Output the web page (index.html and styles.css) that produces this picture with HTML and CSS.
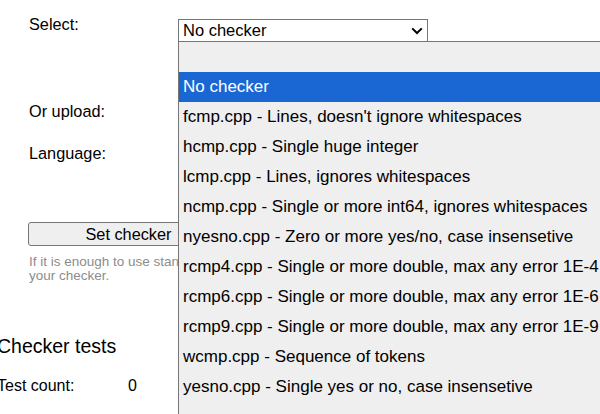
FILE: index.html
```html
<!DOCTYPE html>
<html lang="en">
<head>
<meta charset="utf-8">
<title>Checker</title>
<link rel="stylesheet" href="styles.css">
</head>
<body>
<div class="page">
  <form class="form">
    <div class="row row-select">
      <div class="label">Select:</div>
      <div class="control">
        <div class="select-wrap">
          <div class="select">
            <span class="select-value">No checker</span>
            <svg class="chevron" width="12" height="8" viewBox="0 0 12 8"><path d="M1.2 1.4 L6 6 L10.8 1.4" fill="none" stroke="#000" stroke-width="2"/></svg>
          </div>
          <ul class="dropdown">
            <li class="option"></li>
            <li class="option selected">No checker</li>
            <li class="option">fcmp.cpp - Lines, doesn't ignore whitespaces</li>
            <li class="option">hcmp.cpp - Single huge integer</li>
            <li class="option">lcmp.cpp - Lines, ignores whitespaces</li>
            <li class="option">ncmp.cpp - Single or more int64, ignores whitespaces</li>
            <li class="option">nyesno.cpp - Zero or more yes/no, case insensetive</li>
            <li class="option">rcmp4.cpp - Single or more double, max any error 1E-4</li>
            <li class="option">rcmp6.cpp - Single or more double, max any error 1E-6</li>
            <li class="option">rcmp9.cpp - Single or more double, max any error 1E-9</li>
            <li class="option">wcmp.cpp - Sequence of tokens</li>
            <li class="option">yesno.cpp - Single yes or no, case insensetive</li>
            <li class="option"></li>
          </ul>
        </div>
      </div>
    </div>
    <div class="row row-upload">
      <div class="label">Or upload:</div>
    </div>
    <div class="row row-lang">
      <div class="label">Language:</div>
    </div>
    <div class="actions">
      <button type="button" class="btn">Set checker</button>
      <p class="hint">If it is enough to use standard checker, just select it, otherwise upload<br>your checker.</p>
    </div>
  </form>
  <section class="tests">
    <h2 class="tests-title">Checker tests</h2>
    <div class="tests-row">
      <span class="tests-label">Test count:</span>
      <span class="tests-value">0</span>
    </div>
  </section>
</div>
</body>
</html>
```

FILE: styles.css
```css
html, body {
  margin: 0;
  padding: 0;
  overflow: hidden;
  background: #fff;
}
body {
  font-family: "Liberation Sans", Arial, sans-serif;
  font-size: 16px;
  color: #000;
}
.page {
  width: 600px;
  height: 414px;
  overflow: hidden;
  position: relative;
}
.form {
  padding: 15px 0 0 29px;
  margin: 0;
}
.row {
  display: grid;
  grid-template-columns: 149px 1fr;
}
.row-select { height: 87px; }
.row-upload { height: 42px; }
.row-lang { height: 78px; }
.label {
  line-height: normal;
  font-size: 16.3px;
}
.control {
  padding-top: 4px;
}
.select-wrap {
  position: relative;
  width: 250px;
}
.select {
  box-sizing: border-box;
  height: 23px;
  border: 1px solid #767676;
  background: #fff;
  display: flex;
  align-items: center;
  justify-content: space-between;
  padding: 0 4px 0 4px;
}
.select-value {
  line-height: normal;
  font-size: 16.5px;
}
.chevron {
  display: block;
  margin-top: 1px;
}
.dropdown {
  position: absolute;
  left: 0;
  top: 22px;
  width: 460px;
  margin: 0;
  padding: 0;
  list-style: none;
  background: #efefef;
  border: 1px solid #767676;
  z-index: 10;
}
.option {
  height: 30px;
  line-height: 30px;
  padding-left: 4px;
  white-space: nowrap;
  font-size: 17px;
  color: #000;
}
.option.selected {
  background: #1a67d4;
  color: #fff;
}
.actions {
  margin-left: -1px;
}
.btn {
  box-sizing: border-box;
  width: 201px;
  height: 24px;
  border: 1px solid #767676;
  border-radius: 3px;
  background: #efefef;
  font-family: "Liberation Sans", Arial, sans-serif;
  font-size: 16.3px;
  color: #000;
  padding: 0;
  display: block;
}
.hint {
  margin: 9px 0 0 1px;
  font-size: 13.5px;
  line-height: 14px;
  color: #8c8c8c;
  white-space: nowrap;
}
.tests {
  margin-left: -3px;
  padding-top: 52px;
}
.tests-title {
  margin: 0;
  font-size: 19.5px;
  font-weight: normal;
  line-height: normal;
}
.tests-row {
  display: grid;
  grid-template-columns: 131px auto;
  margin-top: 19px;
}
```
